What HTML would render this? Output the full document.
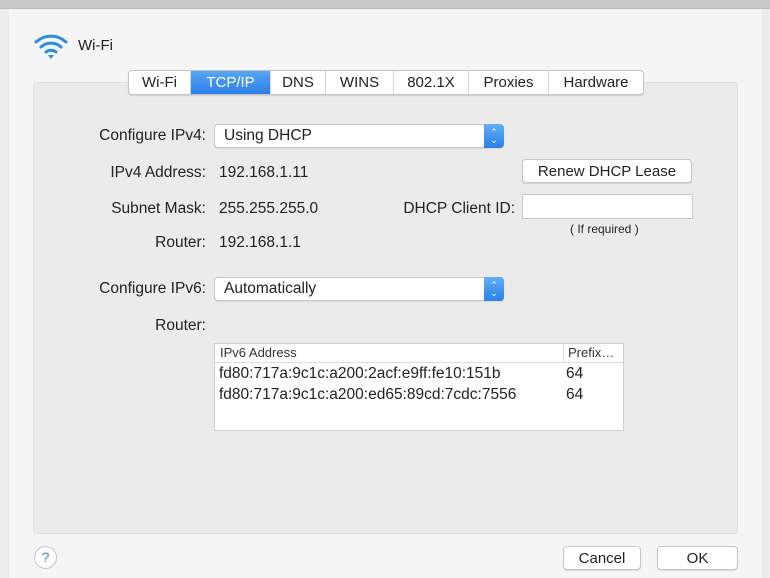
<!DOCTYPE html>
<html><head><meta charset="utf-8"><style>
*{margin:0;padding:0;box-sizing:border-box}
body{width:770px;height:578px;background:#ececec;position:relative;overflow:hidden;font-family:"Liberation Sans",sans-serif;font-size:15.5px;color:#222}
.a{position:absolute}
.top{left:0;top:0;width:770px;height:9px;background:#c9c9c9;border-bottom:1px solid #bdbdbd}
.sheet{left:9px;top:9px;width:753px;height:569px;background:#f5f5f5}
.panel{left:33px;top:82px;width:705px;height:452px;background:#ebebeb;border:1px solid #e2e2e2;border-radius:3px}
.tabs{left:128px;top:70px;height:25px;display:flex;background:#fff;border:1px solid #c4c4c4;border-radius:4px;box-shadow:0 1px 1px rgba(0,0,0,.12);overflow:hidden}
.tabs div{height:23px;line-height:23px;text-align:center;border-right:1px solid #d4d4d4;font-size:15px}
.tabs div:last-child{border-right:none}
.tabs .sel{background:linear-gradient(#5aa6f5,#2a7fe8);color:#fff}
.lbl{text-align:right;width:200px;left:6px}
.pop{height:24px;background:#fff;border:1px solid #c8c8c8;border-radius:4px;box-shadow:0 1px 1px rgba(0,0,0,.08);padding-left:9px;line-height:22px}
.pop .ar{position:absolute;right:-1px;top:-1px;width:20px;height:24px;background:linear-gradient(#62aef7,#2b80ea);border-radius:0 4px 4px 0;color:#fff;font-size:9px;line-height:8px;text-align:center;padding-top:4px}
.btn{background:#fff;border:1px solid #c6c6c6;border-radius:4px;box-shadow:0 1px 1px rgba(0,0,0,.1);text-align:center;line-height:23px;height:24px}
</style></head><body>
<div class="a top"></div>
<div class="a sheet"></div>
<div class="a panel"></div>
<svg class="a" style="left:34px;top:34px" width="36" height="26" viewBox="0 0 36 26">
<g fill="none" stroke="#2c8ce6" stroke-width="3" stroke-linecap="round">
<path d="M2 8 A22 22 0 0 1 32 8"/><path d="M7 13 A15 15 0 0 1 27 13"/><path d="M12 18 A8 8 0 0 1 22 18"/></g>
<path d="M14 21 L20 21 L17 25 Z" fill="#2c8ce6"/></svg>
<div class="a" style="left:78px;top:37px;font-size:15px">Wi-Fi</div>
<div class="a tabs"><div style="width:62px">Wi-Fi</div><div class="sel" style="width:80px">TCP/IP</div><div style="width:55px">DNS</div><div style="width:68px">WINS</div><div style="width:75px">802.1X</div><div style="width:80px">Proxies</div><div style="width:94px">Hardware</div></div>

<div class="a lbl" style="top:127px">Configure IPv4:</div>
<div class="a pop" style="left:214px;top:124px;width:290px">Using DHCP<div class="ar">⌃<br>⌄</div></div>
<div class="a lbl" style="top:164px">IPv4 Address:</div>
<div class="a" style="left:219px;top:164px">192.168.1.11</div>
<div class="a btn" style="left:522px;top:159px;width:170px;font-size:15px">Renew DHCP Lease</div>
<div class="a lbl" style="top:200px">Subnet Mask:</div>
<div class="a" style="left:219px;top:200px">255.255.255.0</div>
<div class="a" style="left:315px;width:200px;text-align:right;top:200px">DHCP Client ID:</div>
<div class="a" style="left:522px;top:194px;width:171px;height:25px;background:#fff;border:1px solid #c8c8c8"></div>
<div class="a" style="left:570px;top:222px;font-size:12px">( If required )</div>
<div class="a lbl" style="top:234px">Router:</div>
<div class="a" style="left:219px;top:234px">192.168.1.1</div>
<div class="a lbl" style="top:280px">Configure IPv6:</div>
<div class="a pop" style="left:214px;top:277px;width:290px">Automatically<div class="ar">⌃<br>⌄</div></div>
<div class="a lbl" style="top:317px">Router:</div>
<div class="a" style="left:214px;top:343px;width:410px;height:88px;background:#fff;border:1px solid #cfcfcf">
<div style="height:19px;border-bottom:1px solid #ddd;font-size:13px;line-height:18px;padding-left:5px;position:relative;color:#333">IPv6 Address<div style="position:absolute;left:348px;top:0;bottom:0;border-left:1px solid #ddd;padding-left:4px">Prefix…</div></div>
<div style="position:relative;height:22px;line-height:22px;padding-left:4px">fd80:717a:9c1c:a200:2acf:e9ff:fe10:151b<span style="position:absolute;left:351px">64</span></div>
<div style="position:relative;height:22px;line-height:20px;padding-left:4px">fd80:717a:9c1c:a200:ed65:89cd:7cdc:7556<span style="position:absolute;left:351px">64</span></div>
</div>
<div class="a" style="left:34px;top:546px;width:23px;height:23px;border-radius:50%;background:#fff;border:1px solid #c6c6c6;color:#3a8de0;text-align:center;line-height:21px;font-size:14px">?</div>
<div class="a btn" style="left:563px;top:546px;width:78px;font-size:15px">Cancel</div>
<div class="a btn" style="left:657px;top:546px;width:81px;font-size:15px">OK</div>
</body></html>
